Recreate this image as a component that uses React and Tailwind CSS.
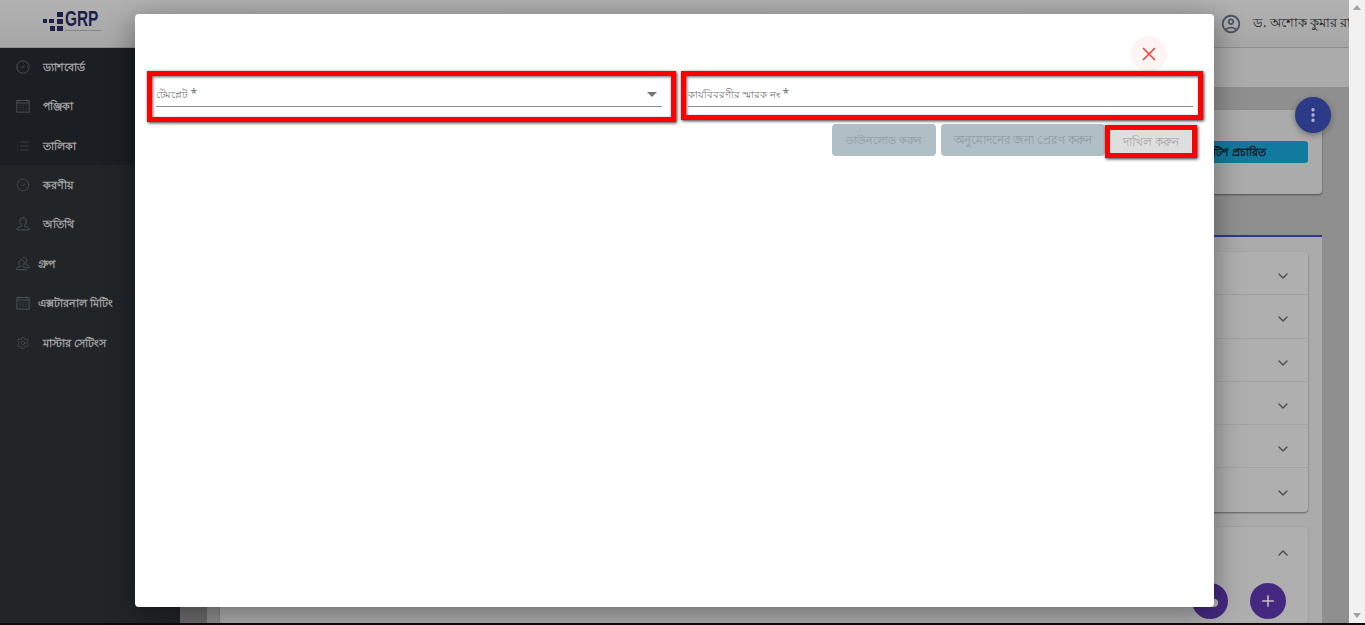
import React from "react";
import { List, CircleCheck, Settings, X, ChevronDown, ChevronUp, Plus, Cloud, EllipsisVertical } from "lucide-react";

const font = { fontFamily: '"Noto Sans", "Liberation Sans", sans-serif' };

function GaugeIcon(props) {
  return (
    <svg viewBox="0 0 14 14" fill="none" stroke="currentColor" {...props}>
      <circle cx="7" cy="7" r="6.2" />
      <path d="M5.6 8 8.8 5.4" />
      <path d="M2.6 7h.7M11 7h.6M7 2.6v.7" />
    </svg>
  );
}
function CalIcon(props) {
  return (
    <svg viewBox="0 0 14 14" fill="none" stroke="currentColor" {...props}>
      <rect x="0.9" y="1.5" width="12.2" height="11.6" />
      <path d="M0.9 4h12.2M3.5 0.5v2M10.5 0.5v2" />
      <path d="M3.5 6.2h1M6.5 6.2h1M9.5 6.2h1M3.5 8.2h1M6.5 8.2h1M9.5 8.2h1M3.5 10.2h1M6.5 10.2h1M9.5 10.2h1" />
    </svg>
  );
}
function UserIcon(props) {
  return (
    <svg viewBox="0 0 14 14" fill="none" stroke="currentColor" {...props}>
      <path d="M7 0.8c-2 0-3.2 1.4-3.2 3.500 0 1.600.7 3 1.600 3.700v1.200c-1.600.5-4 1.200-4.400 2.200v1.500h12v-1.500c-.4-1-2.800-1.700-4.400-2.200V8c.9-.7 1.600-2.100 1.600-3.700C10.200 2.200 9 .8 7 .8z" />
    </svg>
  );
}
function UsersIcon(props) {
  return (
    <svg viewBox="0 0 14 14" fill="none" stroke="currentColor" {...props}>
      <path d="M5.500 2.800c-1.700 0-2.700 1.100-2.700 2.800 0 1.300.6 2.400 1.300 3v1c-1.400.4-3.300 1-3.600 1.800v1.300h10v-1.300c-.3-.8-2.200-1.400-3.600-1.800v-1c.7-.6 1.300-1.700 1.300-3 0-1.700-1-2.800-2.700-2.800z" />
      <path d="M6.500 1c.5-.3 1-.4 1.600-.4 1.700 0 2.700 1.100 2.700 2.800 0 1.300-.6 2.400-1.300 3v1c1.400.4 3.300 1 3.600 1.800v1.300h-2" />
    </svg>
  );
}

const nav = [
  { icon: GaugeIcon, label: "ড্যাশবোর্ড", x: "ml-[13px]" },
  { icon: CalIcon, label: "পঞ্জিকা", x: "ml-[13px]" },
  { icon: List, label: "তালিকা", x: "ml-[13px]" },
  { icon: CircleCheck, label: "করণীয়", x: "ml-[13px]" },
  { icon: UserIcon, label: "অতিথি", x: "ml-[13px]" },
  { icon: UsersIcon, label: "গ্রুপ", x: "ml-[8px]" },
  { icon: CalIcon, label: "এক্সটারনাল মিটিং", x: "ml-[8px]" },
  { icon: Settings, label: "মাস্টার সেটিংস", x: "ml-[13px]" },
];

function NavItem({ item }) {
  const Icon = item.icon;
  return (
    <div className="flex h-[39.5px] items-center pl-[16px]">
      <Icon width={14} height={14} strokeWidth={item.icon === List || item.icon === CircleCheck || item.icon === Settings ? 1 : 0.8} className="shrink-0 text-[#525a61]" />
      <span className={`${item.x} whitespace-nowrap text-[11px] font-bold text-[#a2a2a2]`}>{item.label}</span>
    </div>
  );
}

function Logo() {
  return (
    <div className="ml-[43px] flex items-start pb-[6px]">
      <svg width="20" height="20" viewBox="0 0 20 20" fill="#1d1f4b" className="mt-[1px]">
        <rect x="14" y="1" width="6" height="5" />
        <rect x="0" y="8" width="4" height="4" />
        <rect x="6" y="8" width="5" height="4" />
        <rect x="14" y="8" width="6" height="5" />
        <rect x="7" y="15" width="5" height="5" />
        <rect x="14" y="15" width="6" height="5" />
      </svg>
      <div className="ml-[2px] flex w-[33px] flex-col">
        <span className="origin-left scale-x-[0.7] whitespace-nowrap text-[22px] leading-[18px] font-bold text-[#1d1f4b]" style={{ fontFamily: '"Liberation Sans", sans-serif' }}>GRP</span>
        <span className="mt-[1px] h-[3px] whitespace-nowrap text-[2.5px] leading-[3px] text-[#3a3a55]" style={{ fontFamily: '"Liberation Sans", sans-serif' }}>Government Resource Planning</span>
      </div>
    </div>
  );
}

function AccordionRow({ last }) {
  return (
    <div className={`flex h-[43.3px] items-center justify-end pr-[17px] pt-[6px] ${last ? "" : "border-b border-[#a2a2a2]"}`}>
      <ChevronDown size={16} strokeWidth={2} className="text-[#4c4c4c]" />
    </div>
  );
}

export default function App() {
  return (
    <div className="relative flex h-[625px] w-[1365px] overflow-hidden bg-[#0b0b0b]" style={font}>
      <div className="flex h-[623px] w-[1349px] flex-col overflow-hidden">
        <header className="flex h-[48px] shrink-0 items-center border-b border-[#8e8e8e] bg-gradient-to-b from-[#b2b2b2] to-[#a6a6a6]">
          <Logo />
          <div className="ml-auto flex w-[129px] shrink-0 items-center overflow-hidden">
            <svg width="22" height="22" viewBox="0 0 24 24" fill="#4a5564" className="shrink-0">
              <path d="M12 2C6.480 2 2 6.480 2 12s4.480 10 10 10 10-4.480 10-10S17.520 2 12 2zM7.350 18.500C8.660 17.560 10.260 17 12 17s3.340.560 4.650 1.500c-1.310.940-2.910 1.500-4.650 1.500s-3.340-.560-4.650-1.500zm10.790-1.380C16.450 15.800 14.320 15 12 15s-4.450.8-6.140 2.120C4.700 15.730 4 13.950 4 12c0-4.420 3.580-8 8-8s8 3.580 8 8c0 1.950-.7 3.730-1.860 5.120z" />
              <path d="M12 6c-1.930 0-3.500 1.570-3.500 3.500S10.070 13 12 13s3.500-1.570 3.500-3.500S13.930 6 12 6zm0 5c-.83 0-1.500-.67-1.500-1.500S11.170 8 12 8s1.500.67 1.500 1.500S12.830 11 12 11z" />
            </svg>
            <span className="ml-[11px] whitespace-nowrap text-[12.5px] text-[#1e1e1e]">ড. অশোক কুমার রায়</span>
          </div>
        </header>
        <div className="flex min-h-0 flex-1">
          <aside className="w-[180px] shrink-0 bg-[#212528]">
            <div className="h-[117px] bg-[#1b1e22]">
              <div className="-translate-y-px">
                {nav.slice(0, 3).map((n) => <NavItem key={n.label} item={n} />)}
              </div>
            </div>
            <div>
              {nav.slice(3).map((n) => <NavItem key={n.label} item={n} />)}
            </div>
          </aside>
          <div className="w-[27px] shrink-0 bg-[#6c6c6c]" />
          <main className="flex min-w-0 flex-1 flex-col bg-[#8f8f8f]">
            <div className="ml-[-27px] h-[39px] shrink-0 bg-[#ababab]" />
            <div className="flex min-h-0 flex-1 pl-[13px] pr-[27px]">
              <div className="relative flex w-full flex-col">
                <div className="mt-[23px] flex h-[84px] shrink-0 items-center justify-end rounded-[4px] bg-[#ababab] pr-[14px] shadow-[0_1px_2px_rgba(0,0,0,0.45)]">
                  <div className="flex h-[22px] w-[300px] items-center justify-end rounded-[3px] bg-[#137a9f] pr-[42px] text-[11px] font-bold text-[#111]">নোটিশ প্রচারিত</div>
                </div>
                <div className="mt-[41px] flex min-h-0 flex-1 flex-col border-t-2 border-[#2a3a8f] bg-[#ababab] pr-[14px] pt-[15px]">
                  <div className="rounded-[4px] bg-[#afafaf] shadow-[0_1px_2px_rgba(0,0,0,0.45)]">
                    {[0, 1, 2, 3, 4, 5].map((i) => <AccordionRow key={i} last={i === 5} />)}
                  </div>
                  <div className="mt-[15px] flex h-[120px] justify-end rounded-[4px] bg-[#afafaf] pr-[17px] pt-[18px] shadow-[0_0_2px_rgba(0,0,0,0.2)]">
                    <ChevronUp size={16} strokeWidth={2} className="text-[#4c4c4c]" />
                  </div>
                </div>
                <div className="absolute right-[-9px] top-[10px] flex h-[36px] w-[36px] items-center justify-center rounded-full bg-[#2d3a87] shadow-[0_2px_6px_rgba(0,0,0,0.35)]">
                  <EllipsisVertical size={18} strokeWidth={2.5} className="text-[#b9bcd0]" />
                </div>
                <div className="absolute bottom-[4px] right-[36px] flex items-center gap-[22px]">
                  <div className="flex h-[36px] w-[36px] items-center justify-center rounded-full bg-[#45287f]">
                    <Cloud size={18} fill="#b5b5b5" stroke="#b5b5b5" />
                  </div>
                  <div className="flex h-[36px] w-[36px] items-center justify-center rounded-full bg-[#45287f]">
                    <Plus size={18} strokeWidth={2} className="text-[#c4c4c4]" />
                  </div>
                </div>
              </div>
            </div>
          </main>
        </div>
      </div>

      <div className="flex h-[623px] w-[16px] shrink-0 flex-col items-center justify-between bg-[#f1f1f1] py-[5px]">
        <div className="h-0 w-0 border-x-[4px] border-b-[5px] border-x-transparent border-b-[#a3a3a3]" />
        <div className="h-0 w-0 border-x-[4px] border-t-[5px] border-x-transparent border-t-[#a3a3a3]" />
      </div>

      <div className="absolute left-[135px] top-[14px] h-[593px] w-[1079px] rounded-[4px] bg-white pl-[12px] pr-[11px] shadow-[0_6px_30px_rgba(0,0,0,0.4)]">
        <div className="flex h-[57px] items-start justify-end pt-[22px] pr-[36px]">
          <div className="flex h-[36px] w-[36px] items-center justify-center rounded-full bg-[#fef4f4]">
            <X size={22} strokeWidth={1.8} className="text-[#f4433c]" />
          </div>
        </div>
        <div className="flex items-start gap-[5px]">
          <div className="h-[51px] w-[529px] border-[5px] border-[#ff0000] pl-[4px] pr-[9px] shadow-[1px_1px_3px_rgba(0,0,0,0.8),inset_1px_1px_3px_rgba(0,0,0,0.6)]">
            <div className="flex h-[31px] items-center justify-between border-b border-[#8c8c8c] pr-[5px] pt-[6px]">
              <span className="text-[10px] text-[#757575]">টেমপ্লেট <span className="ml-[1px] text-[12px]">*</span></span>
              <div className="h-0 w-0 border-x-[5px] border-t-[5px] border-x-transparent border-t-[#757575]" />
            </div>
          </div>
          <div className="h-[49px] w-[522px] border-[5px] border-[#ff0000] pl-[2px] pr-[5px] shadow-[1px_1px_3px_rgba(0,0,0,0.8),inset_1px_1px_3px_rgba(0,0,0,0.6)]">
            <div className="flex h-[31px] items-center border-b border-[#8c8c8c] pt-[6px]">
              <span className="text-[9.5px] text-[#757575]">কার্যবিবরণীর স্মারক নং <span className="text-[12px]">*</span></span>
            </div>
          </div>
        </div>
        <div className="mt-[2px] flex items-start justify-end pr-[6px]">
          <button className="h-[32px] w-[104px] rounded-[4px] bg-[#b0bec5] text-[11px] text-[#8d9aa1]">ডাউনলোড করুন</button>
          <button className="ml-[5px] h-[32px] w-[164px] rounded-[4px] bg-[#b0bec5] text-[11.5px] text-[#8d9aa1]">অনুমোদনের জন্য প্রেরণ করুন</button>
          <button className="mt-[1px] h-[33px] w-[92px] border-[5px] border-[#ff0000] bg-[#dedede] text-[11.5px] text-[#a3a3a3] shadow-[1px_1px_3px_rgba(0,0,0,0.8)]">দাখিল করুন</button>
        </div>
      </div>
    </div>
  );
}
